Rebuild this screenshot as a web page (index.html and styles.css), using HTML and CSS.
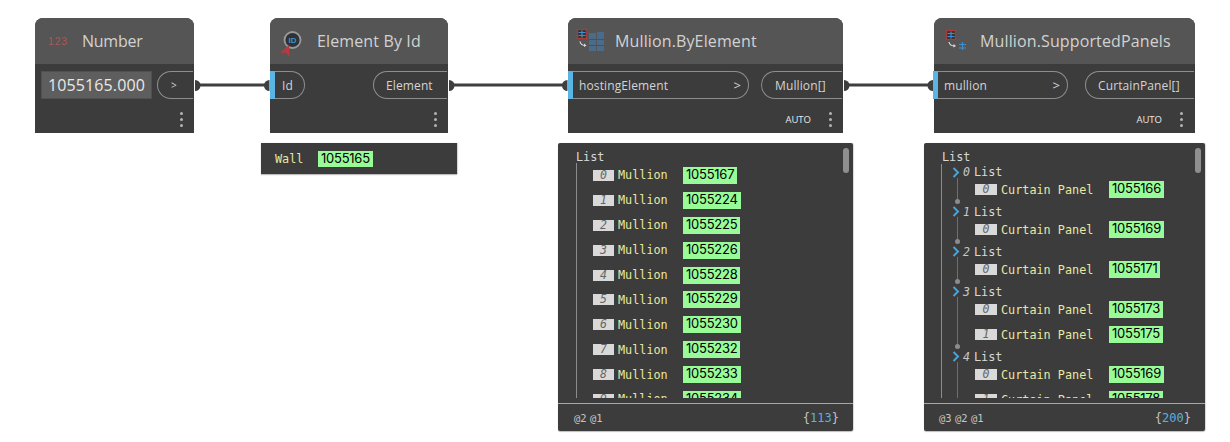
FILE: index.html
```html
<!DOCTYPE html>
<html lang="en">
<head>
<meta charset="utf-8">
<title>Dynamo graph</title>
<link rel="stylesheet" href="styles.css">
</head>
<body>
<main class="canvas">
  <svg class="wires" width="1230" height="442" viewBox="0 0 1230 442" aria-hidden="true">
    <g class="wire">
      <path d="M198 85H266"/><path d="M453 85H563"/><path d="M848 85H929"/>
    </g>
    <g class="cap">
      <path d="M195 80a5.500 5.500 0 0 1 0 11z"/>
      <path d="M269.500 80a5.500 5.500 0 0 0 0 11z"/>
      <path d="M449 80a5.500 5.500 0 0 1 0 11z"/>
      <path d="M567.500 80a5.500 5.500 0 0 0 0 11z"/>
      <path d="M844 80a5.500 5.500 0 0 1 0 11z"/>
      <path d="M933 80a5.500 5.500 0 0 0 0 11z"/>
    </g>
  </svg>

  <section class="node node-number">
    <header class="head"><span class="icon"><span class="num-icon">123</span></span><h2 class="title">Number</h2></header>
    <div class="ports">
      <div class="num-input">1055165.000</div>
      <div class="port out slider">&gt;</div>
    </div>
    <footer class="foot"><span class="dots"><i></i><i></i><i></i></span></footer>
  </section>

  <section class="node node-id">
    <header class="head">
      <span class="icon">
        <svg width="26" height="32" viewBox="0 0 26 32">
          <circle cx="13.500" cy="15" r="8" fill="#2e3338" stroke="#9a9a9a" stroke-width="1.800"/>
          <text x="13.500" y="17.800" class="id-text">ID</text>
          <path d="M1 28l9-8 .5 12-3.500-4.500z" fill="#b8393f"/>
        </svg>
      </span>
      <h2 class="title">Element By Id</h2>
    </header>
    <div class="ports">
      <div class="strip"></div><div class="port in short">Id</div>
      <div class="port out grow-left elem">Element</div>
    </div>
    <footer class="foot"><span class="dots"><i></i><i></i><i></i></span></footer>
  </section>

  <section class="node node-by">
    <header class="head">
      <span class="icon">
        <svg width="32" height="28" viewBox="0 -1 32 28">
          <rect x="1.500" y="1.500" width="9" height="9" fill="#333" stroke="#a93a3e" stroke-width="1.300"/>
          <path d="M6 2.500v7M2.500 4.500h7M2.500 7.500h7" stroke="#3d8fd0" stroke-width="1.200" fill="none"/>
          <path d="M4 13.500c.5 2.500 2.500 3.800 5 4" stroke="#ddd" stroke-width="1.200" fill="none"/>
          <path d="M8 15.500l2.500 2-2.500 1.500z" fill="#ddd"/>
          <path d="M13 5h7v18h-7zM21 4h7v19h-7z" fill="#4b6b8a"/>
          <path d="M13 11.500h15M13 17.500h15" stroke="#46525c" stroke-width="1"/>
        </svg>
      </span>
      <h2 class="title">Mullion.ByElement</h2>
    </header>
    <div class="ports">
      <div class="strip"></div><div class="port in long p-host"><span>hostingElement</span><b>&gt;</b></div>
      <div class="port out grow-left m-out">Mullion[]</div>
    </div>
    <footer class="foot"><span class="auto">AUTO</span><span class="dots"><i></i><i></i><i></i></span></footer>
  </section>

  <section class="node node-sup">
    <header class="head">
      <span class="icon">
        <svg width="26" height="28" viewBox="-1 -2 26 28">
          <rect x="1.500" y="1.500" width="9" height="9" fill="#333" stroke="#a93a3e" stroke-width="1.300"/>
          <path d="M6 2.500v7M2.500 4.500h7M2.500 7.500h7" stroke="#3d8fd0" stroke-width="1.200" fill="none"/>
          <path d="M4 13c.5 2.500 2.500 3.800 5 4" stroke="#ddd" stroke-width="1.200" fill="none"/>
          <path d="M8.500 15l2.500 2-2.500 1.500z" fill="#ddd"/>
          <path d="M17.500 13v8M14 15.500h7M14 19h7" stroke="#3d8fd0" stroke-width="1.200" fill="none"/>
        </svg>
      </span>
      <h2 class="title">Mullion.SupportedPanels</h2>
    </header>
    <div class="ports">
      <div class="strip"></div><div class="port in long p-mull"><span>mullion</span><b>&gt;</b></div>
      <div class="port out grow-left c-out">CurtainPanel[]</div>
    </div>
    <footer class="foot"><span class="auto">AUTO</span><span class="dots"><i></i><i></i><i></i></span></footer>
  </section>

  <aside class="preview prev-wall">
    <span class="mono label">Wall</span><span class="val">1055165</span>
  </aside>

  <aside class="preview prev-list prev-by">
    <div class="scroll"></div>
    <div class="body">
      <div class="mono list-title">List</div>
      <div class="tree tree-flat">
        <div class="row"><span class="idx">0</span><span class="mono label">Mullion</span><span class="val">1055167</span></div>
        <div class="row"><span class="idx">1</span><span class="mono label">Mullion</span><span class="val">1055224</span></div>
        <div class="row"><span class="idx">2</span><span class="mono label">Mullion</span><span class="val">1055225</span></div>
        <div class="row"><span class="idx">3</span><span class="mono label">Mullion</span><span class="val">1055226</span></div>
        <div class="row"><span class="idx">4</span><span class="mono label">Mullion</span><span class="val">1055228</span></div>
        <div class="row"><span class="idx">5</span><span class="mono label">Mullion</span><span class="val">1055229</span></div>
        <div class="row"><span class="idx">6</span><span class="mono label">Mullion</span><span class="val">1055230</span></div>
        <div class="row"><span class="idx">7</span><span class="mono label">Mullion</span><span class="val">1055232</span></div>
        <div class="row"><span class="idx">8</span><span class="mono label">Mullion</span><span class="val">1055233</span></div>
        <div class="row"><span class="idx">9</span><span class="mono label">Mullion</span><span class="val">1055234</span></div>
      </div>
    </div>
    <footer class="levels"><span class="at">@2 @1</span><span class="count">{<em>113</em>}</span></footer>
  </aside>

  <aside class="preview prev-list prev-sup">
    <div class="scroll"></div>
    <div class="body">
      <div class="mono list-title">List</div>
      <div class="tree tree-nested">
        <div class="group">
          <div class="group-head"><svg class="chev" width="8" height="11" viewBox="0 0 8 11"><path d="M1.500 1l4.500 4.500-4.500 4.500" /></svg><span class="gidx">0</span><span class="mono list-name">List</span></div>
          <div class="row"><span class="idx">0</span><span class="mono label">Curtain Panel</span><span class="val">1055166</span></div>
        </div>
        <div class="group">
          <div class="group-head"><svg class="chev" width="8" height="11" viewBox="0 0 8 11"><path d="M1.500 1l4.500 4.500-4.500 4.500" /></svg><span class="gidx">1</span><span class="mono list-name">List</span></div>
          <div class="row"><span class="idx">0</span><span class="mono label">Curtain Panel</span><span class="val">1055169</span></div>
        </div>
        <div class="group">
          <div class="group-head"><svg class="chev" width="8" height="11" viewBox="0 0 8 11"><path d="M1.500 1l4.500 4.500-4.500 4.500" /></svg><span class="gidx">2</span><span class="mono list-name">List</span></div>
          <div class="row"><span class="idx">0</span><span class="mono label">Curtain Panel</span><span class="val">1055171</span></div>
        </div>
        <div class="group">
          <div class="group-head"><svg class="chev" width="8" height="11" viewBox="0 0 8 11"><path d="M1.500 1l4.500 4.500-4.500 4.500" /></svg><span class="gidx">3</span><span class="mono list-name">List</span></div>
          <div class="row"><span class="idx">0</span><span class="mono label">Curtain Panel</span><span class="val">1055173</span></div>
          <div class="row"><span class="idx">1</span><span class="mono label">Curtain Panel</span><span class="val">1055175</span></div>
        </div>
        <div class="group">
          <div class="group-head"><svg class="chev" width="8" height="11" viewBox="0 0 8 11"><path d="M1.500 1l4.500 4.500-4.500 4.500" /></svg><span class="gidx">4</span><span class="mono list-name">List</span></div>
          <div class="row"><span class="idx">0</span><span class="mono label">Curtain Panel</span><span class="val">1055169</span></div>
          <div class="row"><span class="idx">1</span><span class="mono label">Curtain Panel</span><span class="val">1055178</span></div>
        </div>
      </div>
    </div>
    <footer class="levels"><span class="at">@3 @2 @1</span><span class="count">{<em>200</em>}</span></footer>
  </aside>
</main>
</body>
</html>
```
FILE: styles.css
```css
* { box-sizing: border-box; }
html, body { margin: 0; padding: 0; background: #fff; }
.canvas {
  position: relative;
  width: 1230px;
  height: 442px;
  overflow: hidden;
  background: #fff;
  font-family: "Open Sans", "Noto Sans", sans-serif;
}
.wires { position: absolute; left: 0; top: 0; z-index: 2; pointer-events: none; }
.wire path { fill: none; stroke: #3f3f3f; stroke-width: 3; }
.cap path { fill: #3f3f3f; }

.node {
  position: absolute;
  top: 18px;
  height: 115px;
  display: flex;
  flex-direction: column;
  background: #3c3c3c;
  border-radius: 8px 8px 0 0;
  color: #ccc;
}
.node-number { left: 35px; width: 159px; }
.node-id { left: 270px; width: 178px; }
.node-by { left: 568px; width: 275px; }
.node-sup { left: 934px; width: 261px; }

.head {
  height: 46px;
  flex: none;
  display: flex;
  align-items: center;
  background: #555;
  border-radius: 8px 8px 0 0;
}
.icon { display: flex; align-items: center; flex: none; }
.node-number .head { padding-left: 13px; }
.node-number .icon { width: 34px; }
.node-id .head { padding-left: 9px; }
.node-id .icon { width: 38px; }
.node-by .head { padding-left: 8px; }
.node-by .icon { width: 39px; }
.node-sup .head { padding-left: 10px; }
.node-sup .icon { width: 36px; }
.title {
  margin: 0;
  font-size: 16px;
  font-weight: 400;
  letter-spacing: .13px;
  color: #d2d2d2;
  white-space: nowrap;
}
.node-number .title { letter-spacing: -.25px; }
.num-icon {
  font-family: "Liberation Sans", sans-serif;
  font-size: 10.500px;
  letter-spacing: .8px;
  color: #b05458;
}
.id-text {
  font-family: "Liberation Sans", sans-serif;
  font-size: 8px;
  font-weight: 700;
  text-anchor: middle;
  fill: #3a93da;
}

.ports {
  height: 28px;
  margin-top: 7px;
  flex: none;
  display: flex;
  align-items: stretch;
  position: relative;
  font-size: 12px;
  letter-spacing: .12px;
  color: #d4d4d4;
}
.strip { width: 5px; flex: none; background: #5ab4e4; }
.node-sup .strip { margin-left: -1px; }
.port {
  display: flex;
  align-items: center;
  border: 1px solid #8e8e8e;
  white-space: nowrap;
}
.port.in { border-left: 0; border-radius: 0 14px 14px 0; }
.port.out { border-right: 0; border-radius: 14px 0 0 14px; margin-right: 1px; }
.port.short { width: 30px; padding-left: 7px; }
.port.long { padding: 0 7px 0 6px; justify-content: space-between; }
.port.long b { font-weight: 400; font-size: 13px; }
.p-host { width: 176px; }
.p-mull { width: 130px; }
.grow-left { margin-left: auto; }
.elem { width: 74px; padding-left: 12px; }
.m-out { width: 81px; padding-left: 13px; }
.c-out { width: 109px; padding-left: 12px; }
.num-input {
  width: 111px;
  margin-left: 6px;
  margin-right: 5px;
  background: #5e5e5e;
  border: 1px solid #505050;
  font-size: 16px;
  line-height: 26px;
  text-align: center;
  color: #e8e8e8;
}
.slider { width: 36px; padding-left: 13px; font-size: 10px; }

.foot {
  flex: 1;
  display: flex;
  align-items: center;
  justify-content: flex-end;
  gap: 18px;
  padding: 6px 11px 0 0;
}
.node-sup .foot { padding-right: 12px; }
.auto { font-size: 9.500px; font-weight: 500; color: #e8e8e8; }
.dots { display: flex; flex-direction: column; gap: 3px; width: 3px; }
.dots i { display: block; width: 3px; height: 3px; border-radius: 50%; background: #b4b4b4; }

.preview {
  position: absolute;
  top: 143px;
  background: #3c3c3c;
  box-shadow: 0 1px 1px #bdbdbd, 1px 0 1px #dcdcdc;
}
.prev-wall {
  left: 261px;
  width: 196px;
  height: 31px;
  display: flex;
  align-items: center;
  padding-left: 14px;
}
.prev-wall .label { width: 43px; }
.prev-wall .val { height: 16px; }
.prev-list { height: 288px; border-radius: 2px; display: flex; flex-direction: column; }
.prev-by { left: 558px; width: 295px; }
.prev-sup { left: 924px; width: 281px; }
.scroll {
  position: absolute;
  right: 4px;
  top: 5px;
  width: 6px;
  height: 25px;
  border-radius: 3px;
  background: #8f8f8f;
}
.body { height: 249px; margin: 6px 0 5px; overflow: hidden; flex: none; position: relative; padding-left: 18px; }
.mono {
  font-family: "DejaVu Sans Mono", "Liberation Mono", monospace;
  font-size: 11.800px;
  white-space: nowrap;
}
.list-title { color: #d8d8d8; line-height: 16px; }
.label { color: #e8e8a0; }
.val {
  display: inline-block;
  height: 17px;
  padding: 0 3px;
  background: #98fb98;
  font-family: Inter, "Liberation Sans", sans-serif;
  font-size: 13px;
  line-height: 15px;
  letter-spacing: -.25px;
  color: #000;
}
.tree { border-left: 1px solid #8c8c8c; margin-top: -1px; }
.tree-flat { padding-left: 16px; margin-top: -2px; height: 240px; }
.tree-flat .idx { margin-right: 4px; }
.tree-flat .label { width: 65px; }
.tree-nested { padding-left: 10px; margin-left: -1px; }
.row { display: flex; align-items: center; height: 24.900px; }
.idx {
  width: 21px;
  height: 11px;
  flex: none;
  background: #d9d9d9;
  font-family: "DejaVu Sans Mono", monospace;
  font-size: 11.500px;
  line-height: 11px;
  font-style: italic;
  text-align: center;
  color: #666;
}
.group { position: relative; margin-bottom: 1.600px; }
.group-head {
  display: flex;
  align-items: center;
  height: 16px;
}
.chev { flex: none; margin-right: 3px; }
.chev path { fill: none; stroke: #4aa3d6; stroke-width: 2; }
.gidx {
  width: 11px;
  flex: none;
  font-family: "DejaVu Sans Mono", monospace;
  font-size: 11.500px;
  font-style: italic;
  color: #c8c8c8;
}
.list-name { color: #d8d8d8; }
.group .row {
  margin-left: 5px;
  padding-left: 17px;
  border-left: 1px solid #6f6f6f;
}
.group .row:nth-child(2) { margin-top: -2.500px; }
.group .row .idx { width: 22px; margin-right: 4px; }
.group .row .label { width: 108px; }
.group::after {
  content: "";
  position: absolute;
  left: 3px;
  bottom: -2px;
  width: 5px;
  height: 5px;
  border-radius: 50%;
  background: #8c8c8c;
}
.levels {
  height: 28px;
  flex: none;
  display: flex;
  justify-content: space-between;
  align-items: center;
  border-top: 1px solid #a8a8a8;
  padding: 0 14px 0 16px;
  font-family: "DejaVu Sans Mono", monospace;
  color: #c4c4c4;
}
.at { font-size: 10.500px; word-spacing: -3px; }
.prev-sup .levels { padding-left: 15px; }
.count { font-size: 12px; }
.count em { font-style: normal; color: #5ab0e0; }
```
